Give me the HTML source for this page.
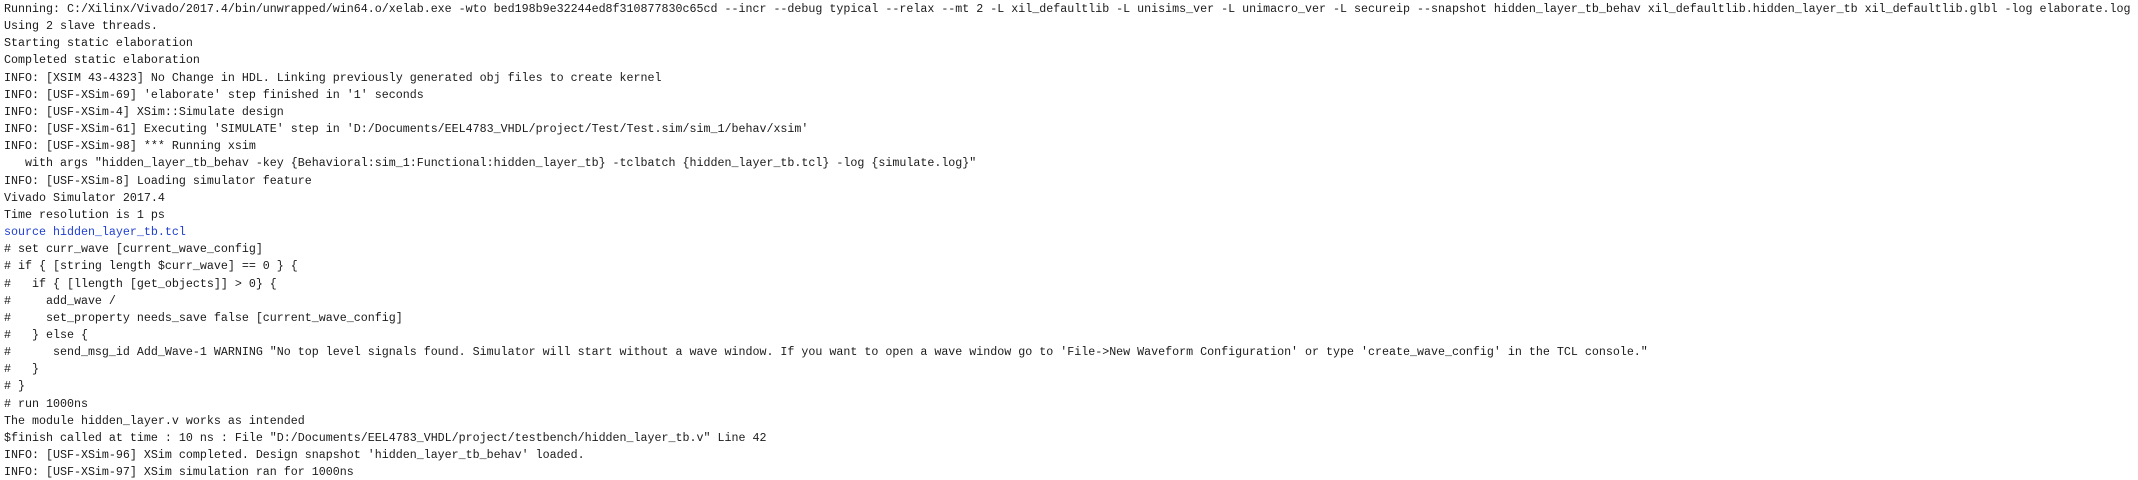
<!DOCTYPE html>
<html><head><meta charset="utf-8"><style>
html,body{margin:0;padding:0;background:#fff;width:2138px;height:480px;overflow:hidden}
pre{margin:0;padding:1px 0 0 4px;font-family:"Liberation Mono","Courier New",monospace;font-size:11.67px;line-height:17.15px;color:#1a1a1a;white-space:pre}
.b{color:#1f3fd0}
</style></head><body><pre>Running: C:/Xilinx/Vivado/2017.4/bin/unwrapped/win64.o/xelab.exe -wto bed198b9e32244ed8f310877830c65cd --incr --debug typical --relax --mt 2 -L xil_defaultlib -L unisims_ver -L unimacro_ver -L secureip --snapshot hidden_layer_tb_behav xil_defaultlib.hidden_layer_tb xil_defaultlib.glbl -log elaborate.log
Using 2 slave threads.
Starting static elaboration
Completed static elaboration
INFO: [XSIM 43-4323] No Change in HDL. Linking previously generated obj files to create kernel
INFO: [USF-XSim-69] 'elaborate' step finished in '1' seconds
INFO: [USF-XSim-4] XSim::Simulate design
INFO: [USF-XSim-61] Executing 'SIMULATE' step in 'D:/Documents/EEL4783_VHDL/project/Test/Test.sim/sim_1/behav/xsim'
INFO: [USF-XSim-98] *** Running xsim
   with args "hidden_layer_tb_behav -key {Behavioral:sim_1:Functional:hidden_layer_tb} -tclbatch {hidden_layer_tb.tcl} -log {simulate.log}"
INFO: [USF-XSim-8] Loading simulator feature
Vivado Simulator 2017.4
Time resolution is 1 ps
<span class="b">source hidden_layer_tb.tcl</span>
# set curr_wave [current_wave_config]
# if { [string length $curr_wave] == 0 } {
#   if { [llength [get_objects]] > 0} {
#     add_wave /
#     set_property needs_save false [current_wave_config]
#   } else {
#      send_msg_id Add_Wave-1 WARNING "No top level signals found. Simulator will start without a wave window. If you want to open a wave window go to 'File->New Waveform Configuration' or type 'create_wave_config' in the TCL console."
#   }
# }
# run 1000ns
The module hidden_layer.v works as intended
$finish called at time : 10 ns : File "D:/Documents/EEL4783_VHDL/project/testbench/hidden_layer_tb.v" Line 42
INFO: [USF-XSim-96] XSim completed. Design snapshot 'hidden_layer_tb_behav' loaded.
INFO: [USF-XSim-97] XSim simulation ran for 1000ns</pre></body></html>
